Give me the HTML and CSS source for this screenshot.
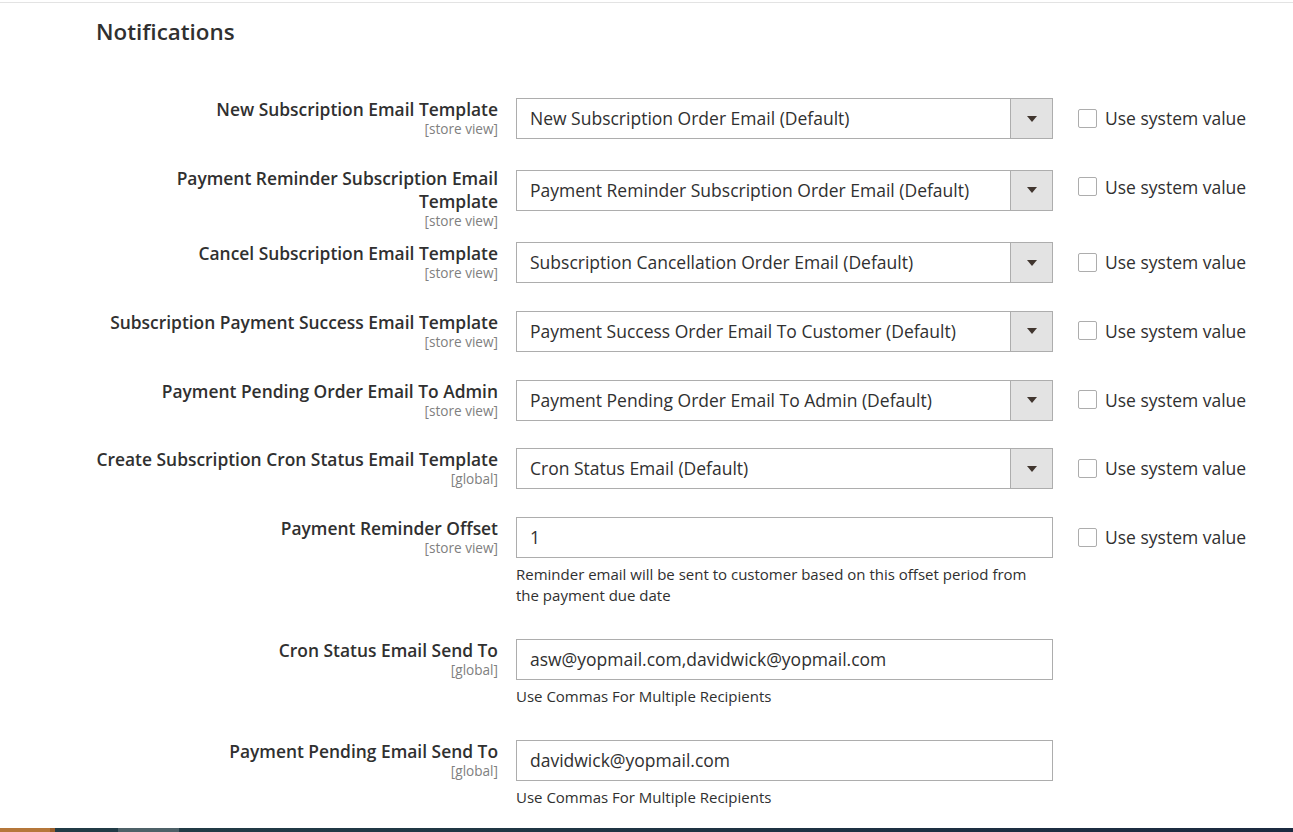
FILE: index.html
```html
<!DOCTYPE html>
<html lang="en">
<head>
<meta charset="utf-8">
<title>Notifications</title>
<link rel="stylesheet" href="styles.css">
</head>
<body>
<div class="topline"></div>
<section class="section">
  <h2 class="section-title">Notifications</h2>
  <div class="fields">
    <div class="row">
      <div class="label"><span class="label-text">New Subscription Email Template</span><span class="scope">[store view]</span></div>
      <div class="value"><div class="select"><span class="select-text">New Subscription Order Email (Default)</span><span class="select-arrow"></span></div></div>
      <label class="use-default"><span class="checkbox"></span><span>Use system value</span></label>
    </div>
    <div class="row">
      <div class="label"><span class="label-text">Payment Reminder Subscription Email<br>Template</span><span class="scope">[store view]</span></div>
      <div class="value"><div class="select select-shift"><span class="select-text">Payment Reminder Subscription Order Email (Default)</span><span class="select-arrow"></span></div></div>
      <label class="use-default"><span class="checkbox"></span><span>Use system value</span></label>
    </div>
    <div class="row">
      <div class="label"><span class="label-text">Cancel Subscription Email Template</span><span class="scope">[store view]</span></div>
      <div class="value"><div class="select"><span class="select-text">Subscription Cancellation Order Email (Default)</span><span class="select-arrow"></span></div></div>
      <label class="use-default"><span class="checkbox"></span><span>Use system value</span></label>
    </div>
    <div class="row">
      <div class="label"><span class="label-text">Subscription Payment Success Email Template</span><span class="scope">[store view]</span></div>
      <div class="value"><div class="select"><span class="select-text">Payment Success Order Email To Customer (Default)</span><span class="select-arrow"></span></div></div>
      <label class="use-default"><span class="checkbox"></span><span>Use system value</span></label>
    </div>
    <div class="row">
      <div class="label"><span class="label-text">Payment Pending Order Email To Admin</span><span class="scope">[store view]</span></div>
      <div class="value"><div class="select"><span class="select-text">Payment Pending Order Email To Admin (Default)</span><span class="select-arrow"></span></div></div>
      <label class="use-default"><span class="checkbox"></span><span>Use system value</span></label>
    </div>
    <div class="row">
      <div class="label"><span class="label-text">Create Subscription Cron Status Email Template</span><span class="scope">[global]</span></div>
      <div class="value"><div class="select"><span class="select-text">Cron Status Email (Default)</span><span class="select-arrow"></span></div></div>
      <label class="use-default"><span class="checkbox"></span><span>Use system value</span></label>
    </div>
    <div class="row">
      <div class="label"><span class="label-text">Payment Reminder Offset</span><span class="scope">[store view]</span></div>
      <div class="value"><div class="input">1</div><p class="note">Reminder email will be sent to customer based on this offset period from the payment due date</p></div>
      <label class="use-default"><span class="checkbox"></span><span>Use system value</span></label>
    </div>
    <div class="row">
      <div class="label"><span class="label-text">Cron Status Email Send To</span><span class="scope">[global]</span></div>
      <div class="value"><div class="input">asw@yopmail.com,davidwick@yopmail.com</div><p class="note">Use Commas For Multiple Recipients</p></div>
      <div></div>
    </div>
    <div class="row">
      <div class="label"><span class="label-text">Payment Pending Email Send To</span><span class="scope">[global]</span></div>
      <div class="value"><div class="input">davidwick@yopmail.com</div><p class="note">Use Commas For Multiple Recipients</p></div>
      <div></div>
    </div>
  </div>
</section>
<div class="bottom-bar"><span class="seg seg-orange"></span><span class="seg seg-orange-dark"></span><span class="seg seg-dark"></span><span class="seg seg-gray"></span><span class="seg seg-rest"></span></div>
</body>
</html>
```
FILE: styles.css
```css
html, body {
  margin: 0;
  padding: 0;
  background: #ffffff;
}
body {
  font-family: "Open Sans", "Noto Sans", sans-serif;
  color: #303030;
  width: 1293px;
  height: 832px;
  overflow: hidden;
}
.topline {
  margin-top: 2px;
  height: 1px;
  background: #e3e3e3;
}
.section {
  padding-left: 96px;
}
.section-title {
  margin: 0;
  padding-top: 15px;
  font-size: 22.4px;
  line-height: 28px;
  font-weight: 600;
  color: #303030;
}
.fields {
  margin-top: 52px;
}
.row {
  display: grid;
  grid-template-columns: 402px 537px auto;
  column-gap: 18px;
  align-items: start;
  padding-bottom: 12.75px;
}
.label {
  display: flex;
  flex-direction: column;
  align-items: flex-end;
  text-align: right;
}
.label-text {
  font-size: 17.4px;
  font-weight: 600;
  line-height: 23px;
  white-space: nowrap;
  color: #303030;
}
.scope {
  font-size: 13.6px;
  line-height: 16.5px;
  color: #808080;
}
.value {
  display: flex;
  flex-direction: column;
}
.select {
  box-sizing: border-box;
  height: 41px;
  border: 1px solid #adadad;
  display: flex;
  align-items: stretch;
  margin-bottom: 15px;
  background: #fff;
}
.select-shift {
  margin-top: 3px;
  margin-bottom: 12px;
}
.select-text {
  flex: 1;
  padding-left: 13px;
  font-size: 17.5px;
  line-height: 39px;
  white-space: nowrap;
  overflow: hidden;
}
.select-arrow {
  width: 41px;
  background: #e3e3e3;
  border-left: 1px solid #adadad;
  display: flex;
  align-items: center;
  justify-content: center;
}
.select-arrow::after {
  content: "";
  width: 0;
  height: 0;
  border-left: 5px solid transparent;
  border-right: 5px solid transparent;
  border-top: 6px solid #41362f;
}
.input {
  box-sizing: border-box;
  height: 41px;
  border: 1px solid #adadad;
  padding-left: 13px;
  font-size: 17.5px;
  line-height: 39px;
  white-space: nowrap;
}
.note {
  margin: 6px 0 20px 0;
  font-size: 15px;
  line-height: 21px;
  color: #303030;
}
.use-default {
  display: flex;
  align-items: center;
  height: 40px;
  padding-left: 7px;
  gap: 8px;
  font-size: 17.5px;
  color: #303030;
  white-space: nowrap;
}
.checkbox {
  box-sizing: border-box;
  width: 19px;
  height: 19px;
  border: 1px solid #adadad;
  border-radius: 2px;
  background: #fff;
}
.bottom-bar {
  position: fixed;
  left: 0;
  right: 0;
  bottom: 0;
  height: 4px;
  display: flex;
}
.seg { display: block; height: 100%; }
.seg-orange { width: 50px; background: #b5773a; }
.seg-orange-dark { width: 5px; background: #9a5e2b; }
.seg-dark { width: 63px; background: #213b46; }
.seg-gray { width: 61px; background: #4e6168; }
.seg-rest { flex: 1; background: linear-gradient(to right, #213b46, #1b2a40); }
```
